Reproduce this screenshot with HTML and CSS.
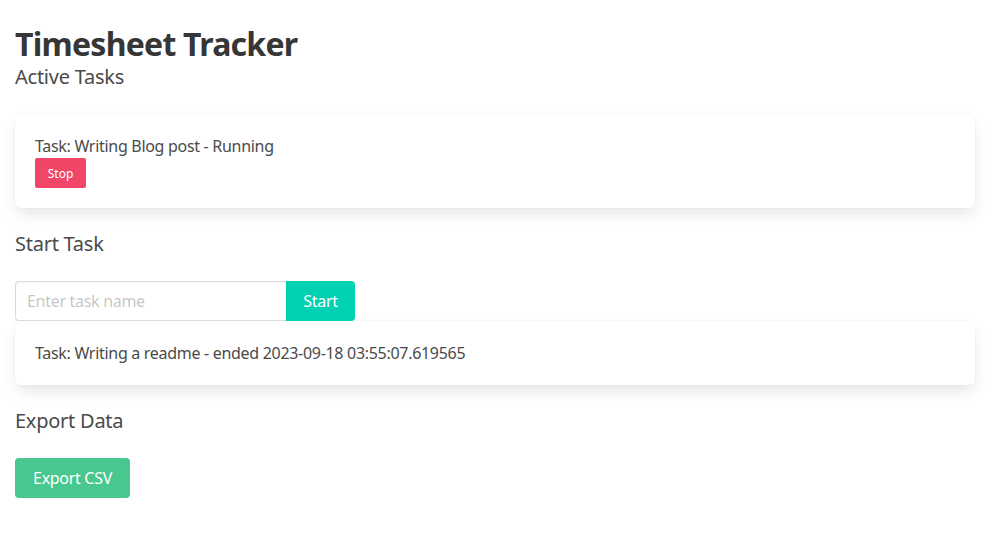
FILE: index.html
```html
<!DOCTYPE html>
<html lang="en">
<head>
<meta charset="utf-8">
<title>Timesheet Tracker</title>
<link rel="stylesheet" href="styles.css">
</head>
<body>
<main class="page">
  <h1 class="title">Timesheet Tracker</h1>
  <h2 class="subtitle">Active Tasks</h2>
  <div class="box box-active">
    <p class="task">Task: Writing Blog post - Running</p>
    <button class="btn btn-danger btn-small">Stop</button>
  </div>
  <h2 class="subtitle section-head">Start Task</h2>
  <form class="field">
    <input class="input" type="text" placeholder="Enter task name">
    <button class="btn btn-primary btn-addon" type="button">Start</button>
  </form>
  <div class="box box-ended">
    <p class="task">Task: Writing a readme - ended 2023-09-18 03:55:07.619565</p>
  </div>
  <h2 class="subtitle section-head">Export Data</h2>
  <button class="btn btn-success export">Export CSV</button>
</main>
</body>
</html>
```
FILE: styles.css
```css
* { box-sizing: border-box; }
html, body { margin: 0; background: #fff; }
body {
  font-family: "Noto Sans", "Open Sans", "Liberation Sans", sans-serif;
  color: #4a4a4a;
  font-size: 16px;
  line-height: 1.5;
  letter-spacing: -0.3px;
}
.page { padding: 26px 19px 40px 15px; }
.title {
  margin: 0;
  font-size: 32px;
  line-height: 36px;
  font-weight: 700;
  color: #363636;
  letter-spacing: -0.75px;
}
.subtitle {
  margin: 2px 0 0;
  font-size: 20px;
  line-height: 25px;
  font-weight: 400;
  color: #4a4a4a;
  letter-spacing: -0.25px;
}
.section-head { margin-top: 23px; }
.box {
  background: #fff;
  border-radius: 6px;
  box-shadow: 0 8px 16px -2px rgba(10,10,10,.1), 0 0 0 1px rgba(10,10,10,.02);
  padding: 20px;
}
.box-active { margin-top: 25px; }
.task { margin: 0; line-height: 24px; }
.btn {
  font-family: inherit;
  letter-spacing: -0.3px;
  border: 1px solid transparent;
  border-radius: 4px;
  color: #fff;
  cursor: pointer;
  display: inline-flex;
  align-items: center;
  justify-content: center;
  font-size: 16px;
  height: 40px;
  padding: 0 16px;
}
.btn-small { font-size: 12px; height: 30px; border-radius: 2px; padding: 0; width: 51px; letter-spacing: 0; }
.btn-danger { background: #f14668; }
.btn-primary { background: #00d1b2; }
.btn-success { background: #48c78e; }
.field { display: flex; margin: 25px 0 0; }
.input {
  font-family: inherit;
  font-size: 16px;
  letter-spacing: -0.3px;
  width: 271px;
  height: 40px;
  border: 1px solid #dbdbdb;
  border-right: none;
  border-radius: 4px 0 0 4px;
  padding: 0 11px;
  color: #363636;
  box-shadow: inset 0 1px 2px rgba(10,10,10,.05);
  outline: none;
}
.input::placeholder { color: rgba(54,54,54,.3); }
.btn-addon { width: 69px; border-radius: 0 4px 4px 0; padding: 0; }
.box-ended { margin-top: 0; }
.export { margin-top: 25px; width: 115px; padding: 0; }
```
